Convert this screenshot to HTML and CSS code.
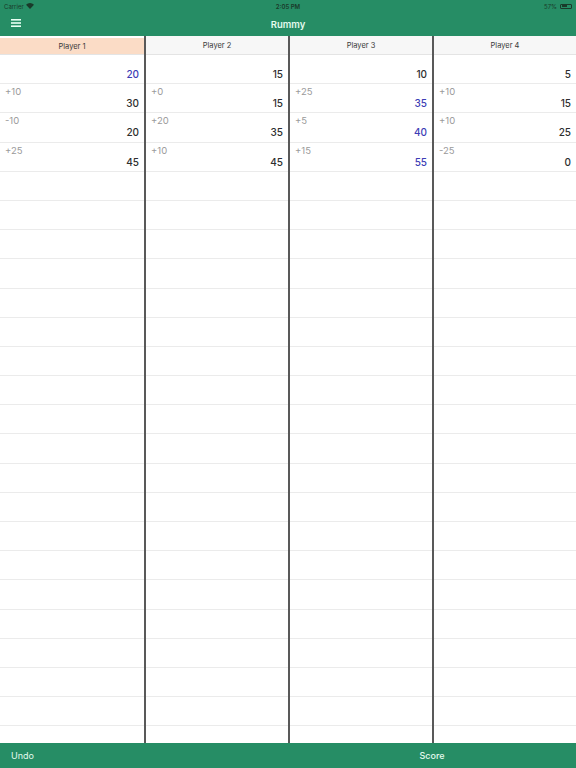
FILE: index.html
```html
<!DOCTYPE html>
<html lang="en">
<head>
  <meta charset="UTF-8">
  <meta name="viewport" content="width=device-width, initial-scale=1.0">
  <title>Rummy</title>
  <link rel="stylesheet" href="styles.css">
</head>
<body>

  <header class="topbar">
    <div class="status">
      <span class="carrier">Carrier
        <svg class="wifi" viewBox="0 0 12 9" width="8" height="6"><path d="M6 9 L0 2.6 A8.6 8.6 0 0 1 12 2.6 Z" fill="#1a3a2a"/></svg>
      </span>
      <span class="clock">2:05 PM</span>
      <span class="battery">57% <span class="cell"><span class="charge"></span></span></span>
    </div>
    <div class="nav">
      <svg class="menu" viewBox="0 0 10 8" width="10" height="8">
        <rect x="0" y="0" width="10" height="1.6" fill="#e9fff3"/>
        <rect x="0" y="3.2" width="10" height="1.6" fill="#e9fff3"/>
        <rect x="0" y="6.4" width="10" height="1.6" fill="#e9fff3"/>
      </svg>
      <h1 class="title">Rummy</h1>
    </div>
  </header>

  <main class="board" id="board"></main>

  <footer class="bottombar">
    <span class="undo">Undo</span>
    <span class="score">Score</span>
  </footer>

  <script>
    // each player: list of [delta, total, leading]
    const players = [
      { name: 'Player 1', active: true, rows: [[null, 20, true], ['+10', 30], ['-10', 20], ['+25', 45]] },
      { name: 'Player 2', rows: [[null, 15], ['+0', 15], ['+20', 35], ['+10', 45]] },
      { name: 'Player 3', rows: [[null, 10], ['+25', 35, true], ['+5', 40, true], ['+15', 55, true]] },
      { name: 'Player 4', rows: [[null, 5], ['+10', 15], ['+10', 25], ['-25', 0]] }
    ];
    const totalRows = 24;

    const board = document.getElementById('board');
    players.forEach(function (p) {
      const col = document.createElement('section');
      col.className = 'column';
      let html = '<div class="head' + (p.active ? ' active' : '') + '">' + p.name + '</div>';
      for (let i = 0; i < totalRows; i++) {
        const r = p.rows[i];
        if (r) {
          html += '<div class="row"><span class="delta">' + (r[0] || '') + '</span>' +
            '<span class="total' + (r[2] ? ' lead' : '') + '">' + r[1] + '</span></div>';
        } else {
          html += '<div class="row"></div>';
        }
      }
      col.innerHTML = html;
      board.appendChild(col);
    });
  </script>

</body>
</html>
```

FILE: styles.css
```css
* {
  box-sizing: border-box;
}
html, body {
  height: 100%;
}
body {
  margin: 0;
  display: flex;
  flex-direction: column;
  font-family: 'Inter', 'Liberation Sans', sans-serif;
  background: #fff;
  color: #333;
  overflow: hidden;
}
.topbar {
  background: #268d65;
  height: 36px;
  flex-shrink: 0;
}
.status {
  height: 12px;
  display: grid;
  grid-template-columns: 1fr auto 1fr;
  align-items: center;
  padding: 0 4px;
  font-size: 6px;
  font-weight: 600;
  color: #1a3a2a;
}
.carrier {
  display: flex;
  align-items: center;
  gap: 2px;
  font-weight: 400;
}
.clock {
  text-align: center;
}
.battery {
  justify-self: end;
  display: flex;
  align-items: center;
  gap: 3px;
  font-weight: 400;
}
.cell {
  width: 12px;
  height: 5px;
  border: 1px solid #1a3a2a;
  border-radius: 1px;
  padding: 0.5px;
  display: flex;
}
.charge {
  width: 57%;
  background: #1a3a2a;
}
.nav {
  height: 24px;
  position: relative;
  display: flex;
  align-items: center;
  justify-content: center;
}
.menu {
  position: absolute;
  left: 11px;
  top: 7px;
}
.title {
  margin: 0;
  font-size: 9.5px;
  font-weight: 600;
  color: #e4fbee;
}
.board {
  flex: 1;
  display: grid;
  grid-template-columns: repeat(4, 1fr);
  overflow: hidden;
  min-height: 0;
}
.column {
  display: flex;
  flex-direction: column;
  border-left: 2px solid #595959;
  overflow: hidden;
}
.column:first-child {
  border-left: none;
}
.head {
  height: 19px;
  flex-shrink: 0;
  background: #f7f7f7;
  border-bottom: 1px solid #e4e4e4;
  display: flex;
  align-items: center;
  justify-content: center;
  font-size: 7.5px;
  color: #3a3a3a;
}
.head.active {
  background: #fbdcc6;
  margin-top: 2px;
  height: 17px;
}
.row {
  height: 29.2px;
  flex-shrink: 0;
  border-bottom: 1px solid #ebebeb;
  display: flex;
  flex-direction: column;
  justify-content: space-between;
  padding: 2px 5px 4px 5px;
}
.delta {
  font-size: 9.5px;
  line-height: 12px;
  color: #9a9a9a;
  min-height: 12px;
}
.total {
  align-self: flex-end;
  font-size: 10px;
  line-height: 11px;
  font-weight: 500;
  color: #2e2e2e;
}
.total.lead {
  color: #3d3db5;
}
.bottombar {
  height: 25px;
  flex-shrink: 0;
  background: #268d65;
  display: grid;
  grid-template-columns: 1fr 1fr;
  align-items: center;
  font-size: 9px;
  color: #e4fbee;
}
.undo {
  padding-left: 11px;
}
.score {
  text-align: center;
  font-weight: 500;
}
```
